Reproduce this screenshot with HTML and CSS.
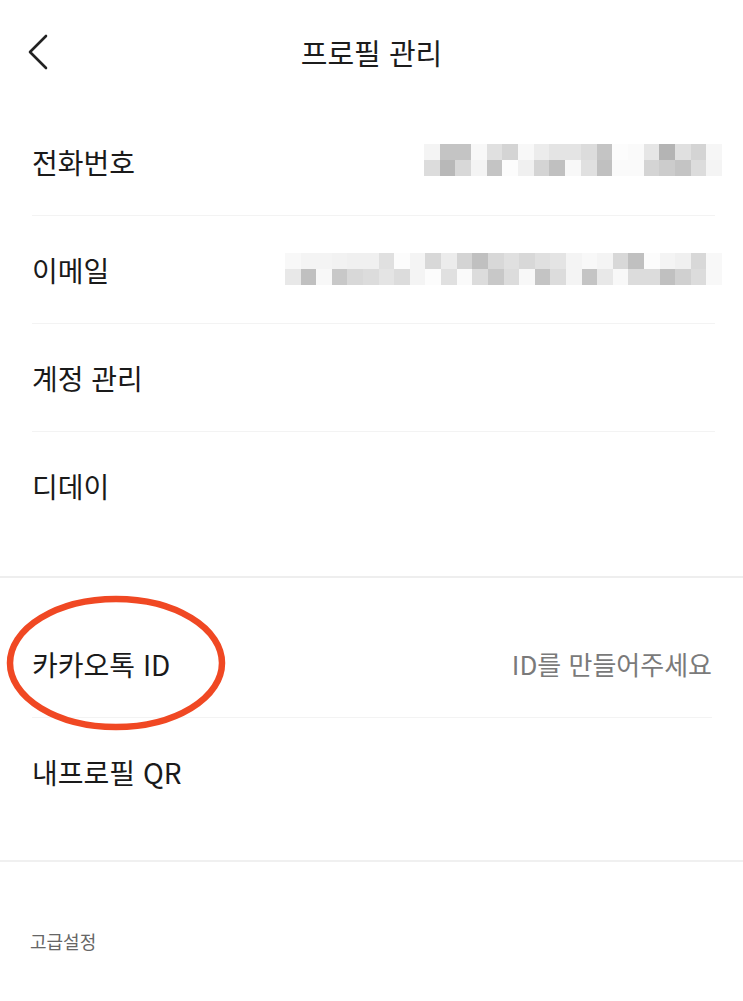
FILE: index.html
```html
<!DOCTYPE html>
<html lang="ko">
<head>
<meta charset="utf-8">
<title>프로필 관리</title>
<link rel="stylesheet" href="styles.css">
</head>
<body>
<div class="page">
  <header class="topbar">
    <svg class="back" width="24" height="40" viewBox="0 0 24 40"><polyline points="19,3 3,19 19,35" fill="none" stroke="#222" stroke-width="2.6" stroke-linecap="round" stroke-linejoin="round"/></svg>
    <h1 class="title">프로필 관리</h1>
  </header>

  <section class="group group-first">
    <div class="row">
      <span class="label">전화번호</span>
      <svg class="mosaic mosaic-phone" viewBox="0 0 19 2" preserveAspectRatio="none" shape-rendering="crispEdges">
        <rect x="0" y="0" width="1" height="1" fill="#f4f4f4"/><rect x="1" y="0" width="1" height="1" fill="#c4c4c4"/><rect x="2" y="0" width="1" height="1" fill="#c4c4c4"/><rect x="3" y="0" width="1" height="1" fill="#f8f8f8"/><rect x="4" y="0" width="1" height="1" fill="#e0e0e0"/><rect x="5" y="0" width="1" height="1" fill="#d4d4d4"/><rect x="6" y="0" width="1" height="1" fill="#f8f8f8"/><rect x="7" y="0" width="1" height="1" fill="#ececec"/><rect x="8" y="0" width="1" height="1" fill="#e4e4e4"/><rect x="9" y="0" width="1" height="1" fill="#e4e4e4"/><rect x="10" y="0" width="1" height="1" fill="#dcdcdc"/><rect x="11" y="0" width="1" height="1" fill="#c4c4c4"/><rect x="12" y="0" width="1" height="1" fill="#fcfcfc"/><rect x="13" y="0" width="1" height="1" fill="#fafafa"/><rect x="14" y="0" width="1" height="1" fill="#e6e6e6"/><rect x="15" y="0" width="1" height="1" fill="#b4b4b4"/><rect x="16" y="0" width="1" height="1" fill="#e0e0e0"/><rect x="17" y="0" width="1" height="1" fill="#d4d4d4"/><rect x="18" y="0" width="1" height="1" fill="#f6f6f6"/>
        <rect x="0" y="1" width="1" height="1" fill="#dcdcdc"/><rect x="1" y="1" width="1" height="1" fill="#b8b8b8"/><rect x="2" y="1" width="1" height="1" fill="#d8d8d8"/><rect x="3" y="1" width="1" height="1" fill="#f4f4f4"/><rect x="4" y="1" width="1" height="1" fill="#c4c4c4"/><rect x="5" y="1" width="1" height="1" fill="#fcfcfc"/><rect x="6" y="1" width="1" height="1" fill="#f0f0f0"/><rect x="7" y="1" width="1" height="1" fill="#d4d4d4"/><rect x="8" y="1" width="1" height="1" fill="#c0c0c0"/><rect x="9" y="1" width="1" height="1" fill="#f8f8f8"/><rect x="10" y="1" width="1" height="1" fill="#e0e0e0"/><rect x="11" y="1" width="1" height="1" fill="#c0c0c0"/><rect x="12" y="1" width="1" height="1" fill="#fafafa"/><rect x="13" y="1" width="1" height="1" fill="#fafafa"/><rect x="14" y="1" width="1" height="1" fill="#d4d4d4"/><rect x="15" y="1" width="1" height="1" fill="#cccccc"/><rect x="16" y="1" width="1" height="1" fill="#c4c4c4"/><rect x="17" y="1" width="1" height="1" fill="#dcdcdc"/><rect x="18" y="1" width="1" height="1" fill="#f4f4f4"/>
      </svg>
    </div>
    <div class="row">
      <span class="label">이메일</span>
      <svg class="mosaic mosaic-mail" viewBox="0 0 28 2" preserveAspectRatio="none" shape-rendering="crispEdges">
        <rect x="0" y="0" width="1" height="1" fill="#f8f8f8"/><rect x="1" y="0" width="1" height="1" fill="#f4f4f4"/><rect x="2" y="0" width="1" height="1" fill="#f4f4f4"/><rect x="3" y="0" width="1" height="1" fill="#f2f2f2"/><rect x="4" y="0" width="1" height="1" fill="#f0f0f0"/><rect x="5" y="0" width="1" height="1" fill="#f0f0f0"/><rect x="6" y="0" width="1" height="1" fill="#e0e0e0"/><rect x="7" y="0" width="1" height="1" fill="#fcfcfc"/><rect x="8" y="0" width="1" height="1" fill="#f4f4f4"/><rect x="9" y="0" width="1" height="1" fill="#d8d8d8"/><rect x="10" y="0" width="1" height="1" fill="#ececec"/><rect x="11" y="0" width="1" height="1" fill="#d4d4d4"/><rect x="12" y="0" width="1" height="1" fill="#c0c0c0"/><rect x="13" y="0" width="1" height="1" fill="#d8d8d8"/><rect x="14" y="0" width="1" height="1" fill="#e0e0e0"/><rect x="15" y="0" width="1" height="1" fill="#d8d8d8"/><rect x="16" y="0" width="1" height="1" fill="#e0e0e0"/><rect x="17" y="0" width="1" height="1" fill="#e4e4e4"/><rect x="18" y="0" width="1" height="1" fill="#f4f4f4"/><rect x="19" y="0" width="1" height="1" fill="#f8f8f8"/><rect x="20" y="0" width="1" height="1" fill="#f4f4f4"/><rect x="21" y="0" width="1" height="1" fill="#d8d8d8"/><rect x="22" y="0" width="1" height="1" fill="#c0c0c0"/><rect x="23" y="0" width="1" height="1" fill="#fcfcfc"/><rect x="24" y="0" width="1" height="1" fill="#f4f4f4"/><rect x="25" y="0" width="1" height="1" fill="#f0f0f0"/><rect x="26" y="0" width="1" height="1" fill="#d8d8d8"/><rect x="27" y="0" width="1" height="1" fill="#f8f8f8"/>
        <rect x="0" y="1" width="1" height="1" fill="#e8e8e8"/><rect x="1" y="1" width="1" height="1" fill="#c0c0c0"/><rect x="2" y="1" width="1" height="1" fill="#f8f8f8"/><rect x="3" y="1" width="1" height="1" fill="#c8c8c8"/><rect x="4" y="1" width="1" height="1" fill="#d8d8d8"/><rect x="5" y="1" width="1" height="1" fill="#dcdcdc"/><rect x="6" y="1" width="1" height="1" fill="#e4e4e4"/><rect x="7" y="1" width="1" height="1" fill="#dcdcdc"/><rect x="8" y="1" width="1" height="1" fill="#f4f4f4"/><rect x="9" y="1" width="1" height="1" fill="#fcfcfc"/><rect x="10" y="1" width="1" height="1" fill="#e0e0e0"/><rect x="11" y="1" width="1" height="1" fill="#fafafa"/><rect x="12" y="1" width="1" height="1" fill="#dcdcdc"/><rect x="13" y="1" width="1" height="1" fill="#c8c8c8"/><rect x="14" y="1" width="1" height="1" fill="#dcdcdc"/><rect x="15" y="1" width="1" height="1" fill="#f8f8f8"/><rect x="16" y="1" width="1" height="1" fill="#c4c4c4"/><rect x="17" y="1" width="1" height="1" fill="#dcdcdc"/><rect x="18" y="1" width="1" height="1" fill="#f4f4f4"/><rect x="19" y="1" width="1" height="1" fill="#c4c4c4"/><rect x="20" y="1" width="1" height="1" fill="#e8e8e8"/><rect x="21" y="1" width="1" height="1" fill="#f8f8f8"/><rect x="22" y="1" width="1" height="1" fill="#dcdcdc"/><rect x="23" y="1" width="1" height="1" fill="#dcdcdc"/><rect x="24" y="1" width="1" height="1" fill="#c0c0c0"/><rect x="25" y="1" width="1" height="1" fill="#d0d0d0"/><rect x="26" y="1" width="1" height="1" fill="#dcdcdc"/><rect x="27" y="1" width="1" height="1" fill="#f8f8f8"/>
      </svg>
    </div>
    <div class="row">
      <span class="label">계정 관리</span>
    </div>
    <div class="row row-last">
      <span class="label">디데이</span>
    </div>
  </section>

  <section class="group group-second">
    <div class="row row-kakao">
      <span class="label">카카오톡 ID</span>
      <span class="hint">ID를 만들어주세요</span>
      <svg class="circle" width="225" height="141" viewBox="0 0 225 141"><ellipse cx="112" cy="70" rx="106" ry="64" fill="none" stroke="#f04823" stroke-width="6.5"/></svg>
    </div>
    <div class="row row-last">
      <span class="label">내프로필 QR</span>
    </div>
  </section>

  <section class="advanced">
    <span class="advanced-label">고급설정</span>
  </section>
</div>
</body>
</html>
```

FILE: styles.css
```css
html, body {
  margin: 0;
  padding: 0;
  background: #ffffff;
}

body {
  font-family: "Noto Sans CJK KR", "Noto Sans", sans-serif;
  color: #1c1c1c;
}

.page {
  width: 743px;
  min-height: 1001px;
  overflow: hidden;
}

.topbar {
  height: 108px;
  padding-bottom: 4px;
  box-sizing: border-box;
  display: flex;
  align-items: center;
  justify-content: center;
  position: relative;
}

.back {
  position: absolute;
  left: 27px;
  top: 33px;
}

.title {
  margin: 0;
  font-size: 29px;
  font-weight: 400;
  letter-spacing: 0;
  color: #1c1c1c;
}

.group-first {
  padding-bottom: 36px;
  border-bottom: 2px solid #eeeeee;
}

.group-second {
  padding-top: 32px;
  padding-bottom: 34px;
  border-bottom: 2px solid #f0f0f0;
}

.row {
  height: 108px;
  box-sizing: border-box;
  margin: 0 28px 0 32px;
  display: flex;
  align-items: center;
  justify-content: space-between;
  border-bottom: 1px solid #f3f3f3;
  position: relative;
}

.row-last {
  border-bottom: none;
}

.label {
  font-size: 28px;
  font-weight: 400;
  color: #1a1a1a;
  line-height: 1;
}

.mosaic {
  display: block;
  height: 32px;
  margin-right: -7px;
  filter: blur(0.7px);
}

.mosaic-phone {
  width: 298px;
  margin-top: -4px;
}

.mosaic-mail {
  width: 437px;
  margin-top: -2px;
}

.row-kakao {
  margin-right: 31px;
}

.hint {
  font-size: 26px;
  color: #7a7a7a;
  line-height: 1;
}

.circle {
  position: absolute;
  left: -28px;
  top: -17px;
}

.advanced {
  height: 160px;
  padding-left: 30px;
  display: flex;
  align-items: center;
}

.advanced-label {
  font-size: 18px;
  color: #666666;
  margin-top: -2px;
}
```
